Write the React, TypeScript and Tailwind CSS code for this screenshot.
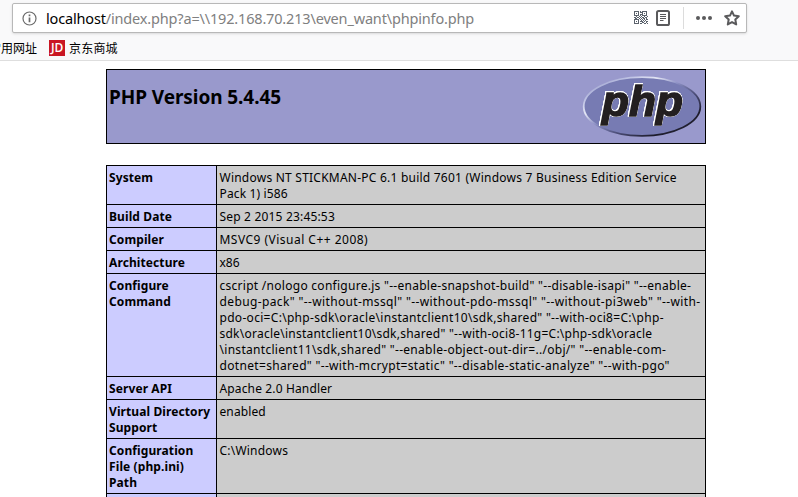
import React from "react";

type Line = [text: string, tracking?: string];
type Row = { name: string[]; value: Line[] };

const rows: Row[] = [
  {
    name: ["System"],
    value: [
      ["Windows NT STICKMAN-PC 6.1 build 7601 (Windows 7 Business Edition Service", "tracking-[0.23px]"],
      ["Pack 1) i586", "tracking-[0.15px]"],
    ],
  },
  { name: ["Build Date"], value: [["Sep 2 2015 23:45:53", "tracking-[0.18px]"]] },
  { name: ["Compiler"], value: [["MSVC9 (Visual C++ 2008)", "tracking-[0.48px]"]] },
  { name: ["Architecture"], value: [["x86"]] },
  {
    name: ["Configure", "Command"],
    value: [
      ['cscript /nologo configure.js "--enable-snapshot-build" "--disable-isapi" "--enable-', "tracking-[0.275px]"],
      ['debug-pack" "--without-mssql" "--without-pdo-mssql" "--without-pi3web" "--with-', "tracking-[0.37px]"],
      ["pdo-oci=C:\\php-sdk\\oracle\\instantclient10\\sdk,shared\" \"--with-oci8=C:\\php-", "tracking-[0.3px]"],
      ["sdk\\oracle\\instantclient10\\sdk,shared\" \"--with-oci8-11g=C:\\php-sdk\\oracle", "tracking-[0.24px]"],
      ["\\instantclient11\\sdk,shared\" \"--enable-object-out-dir=../obj/\" \"--enable-com-", "tracking-[0.295px]"],
      ['dotnet=shared" "--with-mcrypt=static" "--disable-static-analyze" "--with-pgo"', "tracking-[0.325px]"],
    ],
  },
  { name: ["Server API"], value: [["Apache 2.0 Handler", "tracking-[0.14px]"]] },
  { name: ["Virtual Directory", "Support"], value: [["enabled", "tracking-[0.1px]"]] },
  { name: ["Configuration", "File (php.ini)", "Path"], value: [["C:\\Windows", "tracking-[0.22px]"]] },
];

const qr = [
  "11111010111110",
  "10001011100010",
  "10101000101010",
  "10001011100010",
  "11111010111110",
  "00100101001001",
  "11011010110110",
  "01100101011010",
  "11111010101011",
  "10001001010100",
  "10101011101011",
  "10001000110010",
  "11111011001101",
  "00000000000000",
];

function QrIcon() {
  return (
    <svg width="14" height="14" viewBox="0 0 14 14" fill="#5b626c" shapeRendering="crispEdges">
      {qr.flatMap((line, y) =>
        line.split("").map((c, x) => (c === "1" ? <rect key={`${x}-${y}`} x={x} y={y} width="1" height="1" /> : null)),
      )}
    </svg>
  );
}

function PhpLogo() {
  return (
    <svg width="120" height="67" viewBox="0 0 120 67">
      <defs>
        <linearGradient id="rim" x1="0" y1="0" x2="1" y2="1">
          <stop offset="0" stopColor="#8287bb" />
          <stop offset="0.2" stopColor="#bfc3e4" />
          <stop offset="0.32" stopColor="#e4e6f5" />
          <stop offset="0.45" stopColor="#8c90c4" />
          <stop offset="0.62" stopColor="#4b4d78" />
          <stop offset="0.8" stopColor="#1d1c2b" />
          <stop offset="1" stopColor="#2b2a40" />
        </linearGradient>
      </defs>
      <ellipse cx="60" cy="33.5" rx="58.3" ry="29.3" fill="#777bb3" stroke="url(#rim)" strokeWidth="1.8" />
      <text
        className="[filter:drop-shadow(0.8px_0_0_#fff)_drop-shadow(-0.8px_0_0_#fff)_drop-shadow(0_0.8px_0_#fff)_drop-shadow(0_-0.8px_0_#fff)]"
        x="20"
        y="43"
        textLength="81"
        lengthAdjust="spacingAndGlyphs"
        fontFamily="'Liberation Sans', Arial, sans-serif"
        fontWeight="700"
        fontStyle="italic"
        fontSize="42"
        fill="#231f20"
        stroke="#231f20"
        strokeWidth="1.5"
      >
        php
      </text>
    </svg>
  );
}

function UrlBar() {
  return (
    <div className="ml-3 flex h-[30px] w-[735px] items-center rounded-[2px] border border-[#b8b8b8] bg-white pl-[9px] shadow-sm">
      <svg width="15" height="15" viewBox="0 0 15 15" fill="none" stroke="#6b6b6b">
        <circle cx="7.5" cy="7.5" r="6.5" strokeWidth="1.2" />
        <path d="M7.5 6.5v4.8M7.5 3.6v1.7" strokeWidth="1.7" />
      </svg>
      <div className="ml-[9px] text-[14.5px] leading-5 tracking-[-0.17px] whitespace-nowrap text-[#808080]">
        <span className="text-black">localhost</span>/index.php?a=\\192.168.70.213\even_want\phpinfo.php
      </div>
      <div className="mr-1.5 ml-auto flex items-center">
        <QrIcon />
        <svg className="ml-2" width="14" height="16" viewBox="0 0 14 16" fill="none" stroke="#5a5a5c">
          <rect x="1" y="1" width="12" height="14" rx="1.6" strokeWidth="2" />
          <path d="M4 4.5h6M4 6.5h6M4 8.5h6M4 10.5h3.5" strokeWidth="1" />
        </svg>
        <div className="ml-[13px] h-[22px] w-px bg-[#dcdcdc]" />
        <svg className="ml-3" width="16" height="4" viewBox="0 0 16 4" fill="#5a5a5c">
          <circle cx="2" cy="2" r="2" />
          <circle cx="8" cy="2" r="2" />
          <circle cx="14" cy="2" r="2" />
        </svg>
        <svg className="ml-3" width="16" height="16" viewBox="0 0 16 16" fill="none" stroke="#5a5a5c">
          <path d="M8 1.3l2 4.3 4.8.6-3.5 3.3.9 4.9L8 12.1l-4.2 2.3.9-4.9L1.2 6.2 6 5.6z" strokeWidth="2" strokeLinejoin="round" />
        </svg>
      </div>
    </div>
  );
}

export default function App() {
  return (
    <div className="h-[497px] w-[798px] overflow-hidden bg-white font-['Noto_Sans','Noto_Sans_CJK_SC',sans-serif] text-black">
      <header className="h-[61px] border-b border-[#dedede] bg-[#f9f9fa] pt-[3px]">
        <UrlBar />
        <div className="mt-[6px] flex h-5 items-center text-[12px] leading-5 whitespace-nowrap">
          <span className="-ml-[11px] w-12">常用网址</span>
          <span className="-mt-0.5 ml-3 flex h-4 w-4 items-center justify-center bg-[#c91623] font-['Open_Sans',sans-serif] text-[12px] leading-4 font-semibold tracking-[-0.2px] text-white">
            JD
          </span>
          <span className="ml-1 tracking-[0.2px]">京东商城</span>
        </div>
      </header>
      <main className="ml-[106px] w-[600px] pt-2">
        <div className="flex h-[75px] justify-between border border-black bg-[#9999cc] pl-[2px]">
          <h1 className="mt-[15px] text-[19px] leading-6 font-bold tracking-[-0.08px]">PHP Version 5.4.45</h1>
          <div className="mt-[3px] mr-[3px]">
            <PhpLogo />
          </div>
        </div>
        <div className="mt-[21px] border-t border-l border-black text-[12px] leading-4">
          {rows.map((row) => (
            <div key={row.name[0]} className="flex border-b border-black whitespace-nowrap">
              <div className="w-[110px] border-r border-black bg-[#ccccff] pt-1 pb-[2px] pl-[2px] font-bold tracking-[0.1px]">
                {row.name.map((t) => (
                  <div key={t}>{t}</div>
                ))}
              </div>
              <div className="flex-1 border-r border-black bg-[#cccccc] pt-1 pb-[2px] pl-[2.5px]">
                {row.value.map(([text, tracking]) => (
                  <div key={text} className={tracking}>
                    {text}
                  </div>
                ))}
              </div>
            </div>
          ))}
          <div className="flex h-5">
            <div className="w-[110px] border-r border-black bg-[#ccccff]" />
            <div className="flex-1 border-r border-black bg-[#cccccc]" />
          </div>
        </div>
      </main>
    </div>
  );
}
